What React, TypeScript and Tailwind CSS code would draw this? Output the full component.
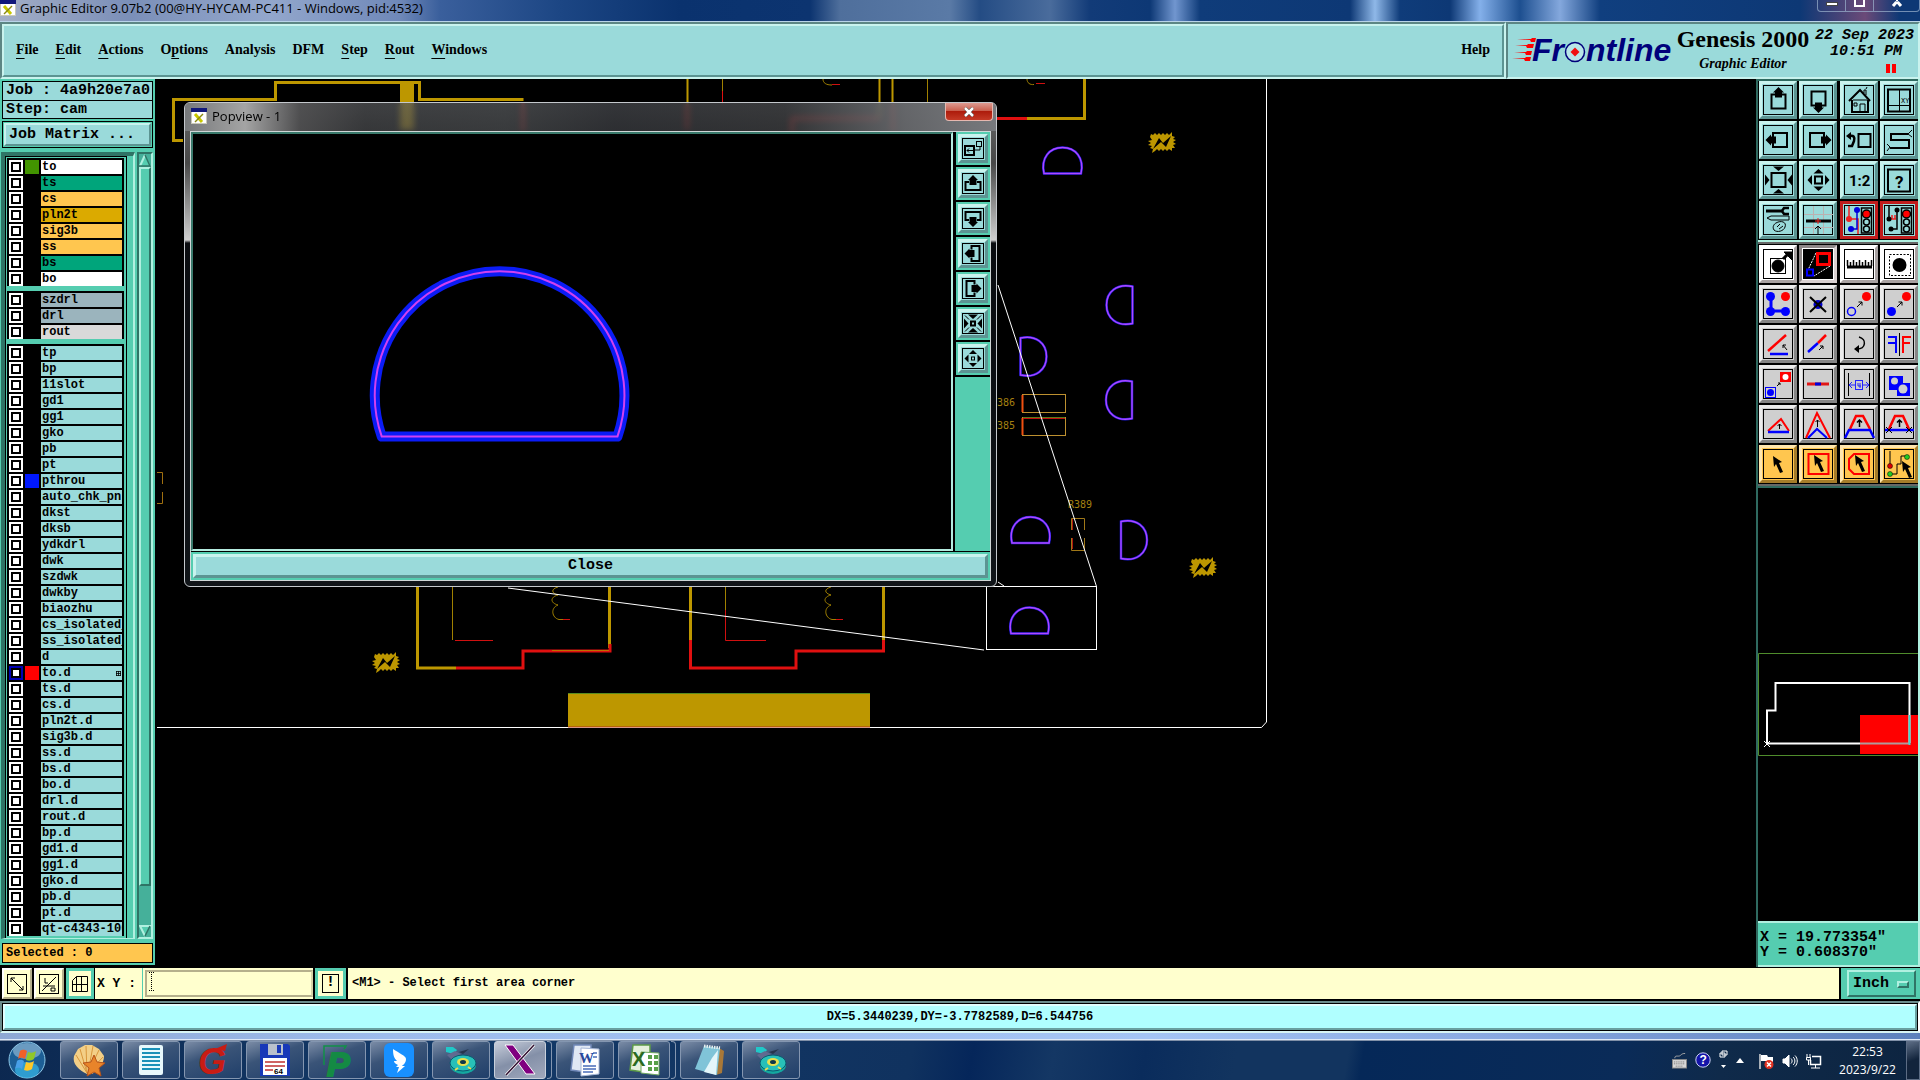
import { useState } from "react";
import type { ReactNode } from "react";

type Layer = {
  name: string;
  bg?: string;
  color?: string;
};

const MONO = "font-['Liberation_Mono',monospace]";
const SERIF = "font-['Liberation_Serif',serif]";
const UI = "font-['Open_Sans',sans-serif]";

const RAISED = "border-t-[#c9f3ee] border-l-[#c9f3ee] border-b-[#5c9492] border-r-[#5c9492]";
const SUNKEN = "border-t-[#5c8684] border-l-[#5c8684] border-b-[#c9f3ee] border-r-[#c9f3ee]";

const menus = [
  { label: "File", key: 0 },
  { label: "Edit", key: 0 },
  { label: "Actions", key: 0 },
  { label: "Options", key: 1 },
  { label: "Analysis", key: -1 },
  { label: "DFM", key: -1 },
  { label: "Step", key: 0 },
  { label: "Rout", key: 0 },
  { label: "Windows", key: 0 },
];

const layerGroups: Layer[][] = [
  [
    { name: "to", bg: "bg-white", color: "bg-[#429400]" },
    { name: "ts", bg: "bg-[#00a57b]" },
    { name: "cs", bg: "bg-[#ffc64f]" },
    { name: "pln2t", bg: "bg-[#dbaa00]" },
    { name: "sig3b", bg: "bg-[#ffc64f]" },
    { name: "ss", bg: "bg-[#ffc64f]" },
    { name: "bs", bg: "bg-[#00a57b]" },
    { name: "bo", bg: "bg-white" },
  ],
  [
    { name: "szdrl", bg: "bg-[#9bb4bd]" },
    { name: "drl", bg: "bg-[#9bb4bd]" },
    { name: "rout", bg: "bg-[#d9d9d9]" },
  ],
  [
    { name: "tp" },
    { name: "bp" },
    { name: "11slot" },
    { name: "gd1" },
    { name: "gg1" },
    { name: "gko" },
    { name: "pb" },
    { name: "pt" },
    { name: "pthrou", color: "bg-[#0018ff]" },
    { name: "auto_chk_pnl" },
    { name: "dkst" },
    { name: "dksb" },
    { name: "ydkdrl" },
    { name: "dwk" },
    { name: "szdwk" },
    { name: "dwkby" },
    { name: "biaozhu" },
    { name: "cs_isolated_" },
    { name: "ss_isolated_" },
    { name: "d" },
    { name: "to.d", color: "bg-[#ff0000]" },
    { name: "ts.d" },
    { name: "cs.d" },
    { name: "pln2t.d" },
    { name: "sig3b.d" },
    { name: "ss.d" },
    { name: "bs.d" },
    { name: "bo.d" },
    { name: "drl.d" },
    { name: "rout.d" },
    { name: "bp.d" },
    { name: "gd1.d" },
    { name: "gg1.d" },
    { name: "gko.d" },
    { name: "pb.d" },
    { name: "pt.d" },
    { name: "qt-c4343-100" },
  ],
];

function XIcon() {
  return (
    <svg width="16" height="16" viewBox="0 0 16 16" className="shrink-0">
      <rect x="0.5" y="0.5" width="15" height="15" fill="#fff" stroke="#c8c8b8" />
      <rect width="16" height="4" fill="#10187b" />
      <path d="M4 6l7 8" stroke="#c8c800" strokeWidth="3" />
      <path d="M12 6l-8 8" stroke="#8a8a10" strokeWidth="1.5" />
    </svg>
  );
}

function TitleBar() {
  return (
    <header className="flex h-[22px] shrink-0 items-start justify-between overflow-hidden border-b border-[#b9d3e8] bg-[linear-gradient(90deg,#a3aec6_0px,#7b8fb8_130px,#93a7cc_270px,#6f88b8_400px,#3a5f9c_440px,#1c4684_560px,#0a326e_680px,#0c3470_810px,#4f6f9c_840px,#5a7aa6_950px,#244c84_980px,#4a6c9c_1050px,#123b78_1090px,#0d3875_1150px,#7196cf_1175px,#0f3c7a_1200px,#0d3875_1350px,#8fb8e8_1375px,#0f3c7a_1400px,#0d3875_1450px,#84b0ea_1480px,#1d4f90_1520px,#84a8dd_1560px,#103f7f_1600px,#0d3875_1800px,#6b4a78_1865px,#0d3875_1900px)]">
      <div className="flex items-center gap-1">
        <XIcon />
        <h1 className={`${UI} text-[13px] leading-[14px] whitespace-nowrap text-black`}>
          Graphic Editor 9.07b2 (00@HY-HYCAM-PC411 - Windows, pid:4532)
        </h1>
      </div>
      <div className="flex h-3 w-[103px] overflow-hidden rounded-b border border-t-0 border-[#9db4cf]/70">
        <button aria-label="Minimize" className="flex w-[28px] items-start justify-center border-r border-[#9db4cf]/70 pt-[2px]">
          <span className="h-1 w-3 border border-[#444] bg-white" />
        </button>
        <button aria-label="Maximize" className="flex w-[28px] items-start justify-center border-r border-[#9db4cf]/70">
          <span className="h-[7px] w-[11px] border-2 border-t-0 border-white" />
        </button>
        <button aria-label="Close" className="flex flex-1 items-start justify-center">
          <svg width="12" height="7" viewBox="0 0 12 7">
            <path d="M2 6l3.5-4M10 6l-3.5-4M5 0h2" stroke="#fff" strokeWidth="3" />
          </svg>
        </button>
      </div>
    </header>
  );
}

function Logo() {
  return (
    <svg width="164" height="44" viewBox="0 -6 164 44" className="shrink-0 overflow-visible" role="img" aria-label="Frontline">
      <g fill="#f00">
        <path d="M5 4h14l1-1h4l-1 4h-4l-1-2z" />
        <path d="M3 10h12l1-1h6l-1 4h-6l-1-2z" />
        <path d="M2 17h12l1-1h5l-1 4h-5l-1-2z" />
        <path d="M0 23h13l1-1h5l-1 4h-5l-1-2z" />
      </g>
      <g fill="#00007b" fontFamily="Liberation Sans, sans-serif" fontSize="32" fontWeight="bold" fontStyle="italic">
        <text x="20" y="26">Fr</text>
        <text x="74" y="26">ntline</text>
      </g>
      <circle cx="63" cy="17" r="9.5" fill="#b8e6e8" stroke="#00007b" strokeWidth="1.5" />
      <path d="M63 12.5l4.5 4.5-4.5 4.5-4.5-4.5z" fill="#f01010" />
    </svg>
  );
}

function MenuBar() {
  return (
    <div className="flex h-[57px] shrink-0 bg-[#9adada]">
      <div className={`flex-1 border-2 ${SUNKEN}`}>
        <nav className={`${SERIF} flex h-full items-center justify-between border-2 ${RAISED} px-3 pb-[2px] text-[14px] font-bold text-black`}>
          <div className="flex gap-[17px]">
            {menus.map((m) => (
              <button key={m.label}>
                {m.key < 0 ? (
                  m.label
                ) : (
                  <>
                    {m.label.slice(0, m.key)}
                    <span className="underline underline-offset-4">{m.label[m.key]}</span>
                    {m.label.slice(m.key + 1)}
                  </>
                )}
              </button>
            ))}
          </div>
          <button>Help</button>
        </nav>
      </div>
      <div className={`flex w-[414px] items-center border-2 ${SUNKEN} pl-1 text-black`}>
        <Logo />
        <div className={`${SERIF} flex w-[134px] flex-col items-center pb-[2px] font-bold`}>
          <p className="text-[24px] leading-7 whitespace-nowrap">Genesis 2000</p>
          <p className="text-[14px] leading-[22px] italic">Graphic Editor</p>
        </div>
        <div className={`${MONO} flex flex-1 flex-col items-end pr-1 text-[15px] leading-4 font-bold italic`}>
          <p className="whitespace-nowrap">22 Sep 2023</p>
          <p className="pr-3">10:51 PM</p>
          <div className="mt-1 mr-[18px] flex gap-[2px]">
            <span className="h-[9px] w-1 bg-[#f00]" />
            <span className="h-[9px] w-1 bg-[#f00]" />
          </div>
        </div>
      </div>
    </div>
  );
}

function LayerRow({ layer, checked, onToggle }: { layer: Layer; checked: boolean; onToggle: () => void }) {
  const id = `layer-${layer.name}`;
  return (
    <li className="mb-[2px] flex h-[14px] gap-[2px]">
      <span className={`flex w-[14px] items-center justify-center ${checked ? "bg-[#0000b5]" : "bg-white"}`}>
        <input
          id={id}
          type="checkbox"
          checked={checked}
          onChange={onToggle}
          className="size-[10px] appearance-none border-2 border-black bg-white"
        />
      </span>
      <span className={`w-[14px] ${layer.color ?? ""}`} />
      <label
        htmlFor={id}
        className={`flex flex-1 items-center justify-between overflow-hidden pl-px text-[12px] leading-[14px] font-bold whitespace-nowrap text-black ${layer.bg ?? "bg-[#9adada]"}`}
      >
        {layer.name}
        {checked && (
          <svg width="5" height="5" viewBox="0 0 5 5" className="mr-px shrink-0">
            <path d="M0 0.5h5M0 2.5h5M0 4.5h5M0.5 0v5M2.5 0v5M4.5 0v5" stroke="#000" strokeWidth="0.8" />
          </svg>
        )}
      </label>
    </li>
  );
}

function LayerPanel() {
  const [active, setActive] = useState("to.d");

  return (
    <aside className={`${MONO} flex w-[155px] shrink-0 flex-col self-start bg-[#55cdb0] py-[2px] pr-[2px] pl-px text-black`}>
      <div className="ml-px border border-black bg-[#9adada] text-[15px] font-bold whitespace-nowrap">
        <p className="border-b border-black px-[3px] leading-[18px]">Job : 4a9h20e7a0</p>
        <p className="px-[3px] leading-[17px]">Step: cam</p>
      </div>
      <div className="mt-[2px] ml-px border border-black p-px">
        <button className={`block w-full border-2 ${RAISED} bg-[#9adada] px-[3px] text-left text-[15px] leading-[19px] font-bold whitespace-nowrap`}>
          Job Matrix ...
        </button>
      </div>
      <div className="mt-1 flex justify-between">
        <div className="flex w-[134px] border-t-4 border-r-2 border-b border-l-4 border-t-[#2f7466] border-r-[#b0f0e0] border-b-[#b0f0e0] border-l-[#2f7466] pr-1">
          <ul className="flex w-[122px] flex-col gap-[3px] border border-b-0 border-black p-px pr-[2px] pb-0">
            {layerGroups.map((group, i) => (
              <li key={i}>
                <ul className="bg-black px-[2px] pt-[2px]">
                  {group.map((layer) => (
                    <LayerRow
                      key={layer.name}
                      layer={layer}
                      checked={active === layer.name}
                      onToggle={() => setActive(layer.name)}
                    />
                  ))}
                </ul>
              </li>
            ))}
          </ul>
          <span className="ml-[2px] w-[2px] bg-[#b0f0e0]" />
        </div>
        <div className="flex w-[16px] flex-col border-2 border-t-[#2f7466] border-r-[#b0f0e0] border-b-[#b0f0e0] border-l-[#2f7466] bg-[#45b09a]">
          <button aria-label="Scroll up">
            <svg width="12" height="13" viewBox="0 0 12 13">
              <path d="M6 0L12 12H0z" fill="#55cdb0" />
              <path d="M6 1L1 12" stroke="#b0f0e0" strokeWidth="2" />
              <path d="M6 1l5 11H0" stroke="#2f7466" strokeWidth="1.5" fill="none" />
            </svg>
          </button>
          <div className="h-[719px] border-2 border-t-[#b0f0e0] border-r-[#2f7466] border-b-[#2f7466] border-l-[#b0f0e0] bg-[#55cdb0]" />
          <button aria-label="Scroll down" className="mt-auto">
            <svg width="12" height="12" viewBox="0 0 12 12">
              <path d="M0 0h12L6 11z" fill="#55cdb0" />
              <path d="M12 1H1l5 10" stroke="#b0f0e0" strokeWidth="2" fill="none" />
              <path d="M6 11l5-10" stroke="#2f7466" strokeWidth="1.5" />
            </svg>
          </button>
        </div>
      </div>
      <p className="mt-1 ml-px border border-black bg-[#ffc64f] px-[3px] text-[12px] leading-[18px] font-bold">Selected : 0</p>
    </aside>
  );
}

/* ---------- toolbar icons, drawn on a 38 unit button ---------- */

function Frame({ fill = "none" }: { fill?: string }) {
  return <rect x="4.5" y="4.5" width="29" height="29" fill={fill} stroke="#000" />;
}

function PanArrow({ angle }: { angle: number }) {
  return (
    <g transform={`rotate(${angle} 19.5 19)`}>
      <rect x="12.5" y="13.5" width="14" height="14" fill="none" stroke="#000" strokeWidth="2" />
      <path d="M19.5 6l5.5 5.5h-2v5h-7v-5h-2z" fill="#000" />
    </g>
  );
}

const FOUR = [0, 90, 180, 270];

const viewIcons: ReactNode[] = [
  <PanArrow angle={0} />,
  <PanArrow angle={180} />,
  <g fill="none" stroke="#000">
    <path d="M12 19v12h16V19M9 20L20 9l10 11" strokeWidth="2" />
    <path d="M13 19h14M20 31v-8h5v8M14 22h3v3h-3zM24 12V9h2v5M26 8l1-2" />
  </g>,
  <g fill="none" stroke="#000">
    <rect x="8" y="8.5" width="22" height="22" strokeWidth="2" />
    <path d="M19.5 8v23M8 24.5h22" />
    <text x="21" y="22" fontSize="7" fill="#000" stroke="none" fontFamily="Liberation Mono, monospace">XY</text>
  </g>,
  <PanArrow angle={270} />,
  <PanArrow angle={90} />,
  <g fill="none" stroke="#000" strokeWidth="2">
    <rect x="18.5" y="13" width="12" height="13" />
    <path d="M9 15c5-1 6 1 5 5l-2 5H8" strokeWidth="2.5" />
    <path d="M6 15l5-4v8z" fill="#000" stroke="none" />
  </g>,
  <g fill="none" stroke="#000">
    <path d="M28 13H11v6h18v8H10" strokeWidth="2" />
    <path d="M32 9l-4 4 4 3M7 23l3 3-3 4" />
  </g>,
  <g>
    <rect x="12.5" y="12" width="14" height="14" fill="none" stroke="#000" strokeWidth="2" />
    {FOUR.map((a) => (
      <path key={a} transform={`rotate(${a} 19.5 19)`} d="M14 5.5h11L19.5 10z" />
    ))}
  </g>,
  <g>
    <rect x="16" y="15.5" width="7" height="7" fill="none" stroke="#000" strokeWidth="2" />
    {FOUR.map((a) => (
      <path key={a} transform={`rotate(${a} 19.5 19)`} d="M14.5 12.5h10L19.5 8z" />
    ))}
  </g>,
  <text x="9" y="25" fontSize="15" fontWeight="bold" fontFamily="Roboto, sans-serif">1:2</text>,
  <g>
    <rect x="8" y="8.5" width="22" height="22" fill="none" stroke="#000" strokeWidth="2" />
    <text x="15" y="27" fontSize="17" fontWeight="bold" fontFamily="Roboto, sans-serif">?</text>
  </g>,
  <g fill="none" stroke="#000">
    <path d="M7 10h17" strokeWidth="3" />
    <path d="M30 7h-5l-2 3 2 3h5" strokeWidth="2.5" />
    <path d="M8 17l4-2h18v4H12z" />
    <path d="M17 22c5-3 11-1 9 4-1 4-8 6-11 3-2-3 0-6 2-7zM18 26l3-3M20 28l4-3" />
  </g>,
  <g fill="none">
    <path d="M14.5 5v28M24.5 5v28M5 13.5h29M5 26.5h29" stroke="#bbb0b0" />
    <path d="M7 20h25" stroke="#000" strokeWidth="3" />
    <path d="M19 17v6M16 20h6" stroke="#e22" />
    <path d="M19 33v-8M16 28l3-3 3 3" stroke="#000" />
  </g>,
  <g fill="none" strokeWidth="1.5">
    <path d="M9 5v13h9v15" stroke="#e22" />
    <path d="M17 9v19h-6" stroke="#00d" />
    <circle cx="9" cy="18" r="3" fill="#e22" />
    <circle cx="17" cy="9" r="3" fill="#00d" />
    <circle cx="11" cy="28" r="3" fill="#00d" />
    <rect x="21.5" y="7" width="10" height="25" stroke="#000" />
    <circle cx="26.5" cy="13" r="4" fill="#f00" stroke="#000" />
    <circle cx="26.5" cy="21" r="3" stroke="#000" />
    <circle cx="26.5" cy="28" r="3" stroke="#000" />
  </g>,
  <g fill="none" strokeWidth="1.5">
    <path d="M9 5v13M17 9v19h-6" stroke="#000" />
    <path d="M9 18h7M12 14v4M15 14v4" stroke="#e22" />
    <circle cx="9" cy="18" r="2.5" fill="#000" />
    <circle cx="17" cy="9" r="2.5" fill="#000" />
    <circle cx="11" cy="28" r="2.5" fill="#000" />
    <rect x="21.5" y="7" width="10" height="25" stroke="#000" />
    <circle cx="26.5" cy="13" r="4" fill="#f00" stroke="#000" />
    <circle cx="26.5" cy="21" r="3" stroke="#000" />
    <circle cx="26.5" cy="28" r="3" stroke="#000" />
  </g>,
];

const Cursor = () => <path d="M14 8l9 6-3 1 4 9-3 1-4-9-2 3z" fill="#000" />;

const editIcons: ReactNode[] = [
  <g fill="none" stroke="#000">
    <rect x="11.5" y="13.5" width="15" height="15" />
    <circle cx="19" cy="21" r="6" fill="#000" />
    <path d="M24 14l6-6" strokeWidth="3" />
    <path d="M25 7h8v8z" fill="#000" />
  </g>,
  <g fill="none">
    <path d="M17 8L9 25M31 21L15 31" stroke="#fff" strokeDasharray="2 1" />
    <rect x="18.5" y="8.5" width="12" height="11" stroke="#f00" strokeWidth="3" />
    <rect x="8" y="24.5" width="6" height="6" stroke="#00f" strokeWidth="2" />
  </g>,
  <g stroke="#000" fill="none">
    <path d="M7 22h25" strokeWidth="3" />
    <path d="M7.5 15v6M10.5 17v4M13.5 15v6M16.5 17v4M19.5 15v6M22.5 17v4M25.5 15v6M28.5 17v4M31.5 15v6" strokeWidth="1.5" />
  </g>,
  <g>
    <rect x="9.5" y="9.5" width="21" height="21" fill="none" stroke="#000" strokeDasharray="2 1.5" />
    <circle cx="19.5" cy="20" r="7" />
  </g>,
  <g fill="#00f">
    <path d="M12 11v15h14" stroke="#00f" strokeWidth="3" fill="none" />
    <circle cx="11.5" cy="11.5" r="4.5" />
    <circle cx="11.5" cy="26.5" r="4.5" />
    <circle cx="26.5" cy="26.5" r="4.5" />
    <circle cx="26.5" cy="11.5" r="4.5" fill="#f00" />
  </g>,
  <g>
    <circle cx="19" cy="19.5" r="4.5" fill="#00c" />
    <path d="M11 12l16 15M27 12L11 27" stroke="#000" strokeWidth="2" />
  </g>,
  <g fill="none">
    <circle cx="11.5" cy="26.5" r="4" stroke="#00f" strokeWidth="1.5" />
    <path d="M17 22l5-5M18.5 17H22v3.5" stroke="#000" />
    <circle cx="26.5" cy="11.5" r="4.5" fill="#f00" />
  </g>,
  <g fill="none">
    <circle cx="11.5" cy="26.5" r="4.5" fill="#00f" />
    <path d="M17 22l5-5M18.5 17H22v3.5" stroke="#000" />
    <circle cx="26.5" cy="11.5" r="4.5" fill="#f00" />
  </g>,
  <g fill="none">
    <path d="M9 26l18-16" stroke="#f00" strokeWidth="2.5" />
    <path d="M11 29h18" stroke="#00f" strokeWidth="2.5" />
    <path d="M28 25l-4-5M24 23v-3h3" stroke="#000" />
  </g>,
  <g fill="none">
    <path d="M9 27l10-9" stroke="#00f" strokeWidth="2.5" />
    <path d="M19 18l8-8" stroke="#f00" strokeWidth="2.5" />
    <path d="M20 25l4-4M21 21h3v3" stroke="#000" />
  </g>,
  <g>
    <path d="M19 12c8 2 7 12-2 12" stroke="#000" strokeWidth="1.5" fill="none" />
    <path d="M14 24l5-4v8z" />
  </g>,
  <g fill="none" strokeWidth="2">
    <path d="M8 12h8v16M8 18h8" stroke="#00f" />
    <path d="M19.5 8v23" stroke="#000" strokeWidth="1" />
    <path d="M31 12h-8v16M30 18h-7" stroke="#f00" />
  </g>,
  <g fill="none">
    <rect x="6.5" y="22.5" width="10" height="10" stroke="#00f" />
    <circle cx="11.5" cy="27.5" r="3.5" fill="#00f" />
    <path d="M18 21l3-3M19 18h2v2" stroke="#000" />
    <rect x="21.5" y="7.5" width="10" height="9" fill="#f00" stroke="#f00" />
    <circle cx="26.5" cy="12" r="3" fill="#fff" />
  </g>,
  <g strokeWidth="3">
    <path d="M8 19h22" stroke="#e01818" />
    <path d="M16 19h6" stroke="#00d" />
  </g>,
  <g fill="none">
    <path d="M8.5 8v23M29.5 8v23" stroke="#000" />
    <path d="M9 20h20M12 17l-3 3 3 3M26 17l3 3-3 3" stroke="#22f" />
    <rect x="15.5" y="15.5" width="7" height="9" fill="#cfcfcf" stroke="#22f" />
    <path d="M18 18v3h3M20 18v5" stroke="#22f" />
  </g>,
  <g>
    <path d="M9 11h14v7h7v13H17v-6H9z" fill="#00f" />
    <circle cx="14.5" cy="16" r="3.5" fill="#cfcfcf" />
    <circle cx="23" cy="24" r="4.5" fill="#cfcfcf" />
  </g>,
  <g fill="none" strokeWidth="2">
    <path d="M9 26l13-12 8 12" stroke="#f00" />
    <path d="M9 27h21" stroke="#00f" strokeWidth="2.5" />
    <path d="M20.5 24v-5M18.5 21l2-2 2 2" stroke="#000" strokeWidth="1" />
  </g>,
  <g fill="none" strokeWidth="2">
    <path d="M7 33L18 8l13 25" stroke="#f00" />
    <path d="M9 33l9-9 10 9" stroke="#00f" />
    <path d="M18.5 22v-7M16.5 17l2-2 2 2" stroke="#000" strokeWidth="1" />
  </g>,
  <g fill="none" strokeWidth="2.5">
    <path d="M10 24l6-13h7l7 13" stroke="#f00" />
    <path d="M5 33l4-8h21l4 8" stroke="#00f" />
    <path d="M19.5 22v-7M17 17.5l2.5-2.5 2.5 2.5" stroke="#000" strokeWidth="1.5" />
  </g>,
  <g fill="none" strokeWidth="2.5">
    <path d="M9 24l6-13h8l6 13" stroke="#f00" />
    <path d="M5 25h29" stroke="#00f" />
    <path d="M6 22l6 6M12 22l-6 6M26 22l6 6M32 22l-6 6" stroke="#000" strokeWidth="1" />
    <path d="M19.5 22v-7M17 17.5l2.5-2.5 2.5 2.5" stroke="#000" strokeWidth="1.5" />
  </g>,
  <g transform="translate(0 3)"><Cursor /></g>,
  <g>
    <rect x="9.5" y="9" width="20" height="20" fill="none" stroke="#f00" strokeWidth="2" />
    <g transform="translate(1 2)"><Cursor /></g>
  </g>,
  <g>
    <path d="M14 9h15v20H14l-5-5V14z" fill="none" stroke="#f00" strokeWidth="2" />
    <g transform="translate(1 2)"><Cursor /></g>
  </g>,
  <g>
    <path d="M10 6v14M10 29h7v-10h4v-8h6" fill="none" stroke="#000" />
    <circle cx="10" cy="21" r="2.5" fill="#d00" stroke="#000" strokeWidth="0.5" />
    <circle cx="10" cy="29" r="2.5" fill="#2c2" stroke="#000" strokeWidth="0.5" />
    <circle cx="27" cy="12" r="2.5" fill="#2c2" stroke="#000" strokeWidth="0.5" />
    <g transform="translate(8 8)"><Cursor /></g>
  </g>,
];

const viewNames = [
  "Pan up", "Pan down", "Home", "Set XY", "Pan left", "Pan right", "Previous zoom", "Serpentine",
  "Zoom out", "Zoom in", "Zoom 1:2", "Help", "Settings", "Snap", "Net analysis", "Net violations",
];
const editNames = [
  "Feature", "Popview", "Measure", "Select window", "Move", "Delete", "Copy outline", "Copy",
  "Rotate", "Extend", "Arc", "Mirror", "Resize", "Join", "Gap", "Contourize",
  "Slope", "Peak", "Trapeze", "Trapeze cut", "Pick", "Pick rectangle", "Pick polygon", "Pick net",
];

function editTone(i: number) {
  if (i === 1) return "bg-white border-t-[#8e8888] border-l-[#8e8888] border-b-[#d8d0d0] border-r-[#d8d0d0]";
  if (i < 4) return "bg-white border-t-white border-l-white border-b-[#a8a2a2] border-r-[#a8a2a2]";
  if (i < 20) return "bg-[#cfcfcf] border-t-[#ececec] border-l-[#ececec] border-b-[#868686] border-r-[#868686]";
  return "bg-[#ffc64f] border-t-[#ffe6ae] border-l-[#ffe6ae] border-b-[#a57c2a] border-r-[#a57c2a]";
}

function ToolButton({ name, tone, children }: { name: string; tone: string; children: ReactNode }) {
  return (
    <button aria-label={name} className={`size-[38px] border-[3px] ${tone}`}>
      <svg width="32" height="32" viewBox="3 3 32 32">
        {children}
      </svg>
    </button>
  );
}

function RightPanel() {
  return (
    <aside className="flex w-[164px] shrink-0 flex-col border-r-2 border-l-2 border-r-[#b0f0e0] border-l-[#2f6a60] bg-black">
      <div className="grid grid-cols-4 justify-start gap-[2px] border-t-2 border-b-2 border-t-[#2f6a60] border-b-[#b0f0e0] pb-px pl-px">
        {viewIcons.map((icon, i) => (
          <ToolButton
            key={viewNames[i]}
            name={viewNames[i]}
            tone={i > 13 ? "bg-[#9adada] border-[#c01c1c]" : `bg-[#9adada] ${RAISED}`}
          >
            <Frame />
            {icon}
          </ToolButton>
        ))}
      </div>
      <div className="grid grid-cols-4 justify-start gap-[2px] border-t-2 border-b-2 border-t-[#666] border-b-[#666] pt-px pb-px pl-px">
        {editIcons.map((icon, i) => (
          <ToolButton key={editNames[i]} name={editNames[i]} tone={editTone(i)}>
            <Frame fill={i === 1 ? "#000" : "none"} />
            {icon}
          </ToolButton>
        ))}
      </div>
      <div className="min-h-0 flex-1 overflow-hidden border-t-2 border-t-[#2f6a60]">
        <svg width="160" height="432" viewBox="0 -1 160 432" fill="none">
          <path d="M161 164.5H0.5v102H161" stroke="#4f8c2c" />
          <rect x="102" y="226" width="58" height="39" fill="#f00" />
          <path d="M102 254.5H9V221.5h8.5V194h134v60" stroke="#fff" strokeWidth="2" />
          <path d="M102 254.5h50" stroke="#b09a9a" strokeWidth="2" />
          <path d="M151.5 226v30" stroke="#3fd8d0" strokeWidth="2" />
          <path d="M6 252l6 6M12 252l-6 6" stroke="#fff" />
        </svg>
      </div>
      <div className={`${MONO} border-t-2 border-b-2 border-t-[#b0f0e0] border-b-[#b0f0e0] bg-[#55cdb0] px-[2px] pt-[7px] pb-[5px] text-[15px] leading-[15px] font-bold text-black`}>
        <p>X = 19.773354"</p>
        <p>Y = 0.608370"</p>
      </div>
    </aside>
  );
}

/* ---------- board canvas ---------- */

function Pad({ x, y, angle }: { x: number; y: number; angle: number }) {
  return (
    <g transform={`translate(${x} ${y}) rotate(${angle})`} fill="none">
      <path d="M-18.5 12.5C-22 -3 -13 -13.5 0 -13.5S22 -3 18.5 12.5z" stroke="#1a1ae0" strokeWidth="2.5" />
      <path d="M-18.5 12.5C-22 -3 -13 -13.5 0 -13.5S22 -3 18.5 12.5z" stroke="#b048ff" strokeWidth="1.4" />
    </g>
  );
}

function Spark({ x, y }: { x: number; y: number }) {
  return (
    <g transform={`translate(${x} ${y})`}>
      <path
        d="M-11 -8l2 1 2-2 2 2 2-2 2 2 2-2 2 2 2-2 2 2 3-3v4l3 1-2 2 3 1-3 2 3 2-3 1 2 3-3 0 0 3-3-2-2 2-2-2-2 2-2-2-2 2-2-2-2 2-3 2 1-4-3-1 2-2-4-1 3-2-3-2 4-1-2-3z"
        fill="#bd9700"
      />
      <path d="M-9 7L-3 -4L1 1L9 -6L4 5L-1 0z" fill="#000" />
    </g>
  );
}

function BoardDrawing() {
  return (
    <svg
      className="h-full w-full"
      viewBox="157 79 1600 888"
      preserveAspectRatio="xMinYMin slice"
      fill="none"
    >
      <path d="M1266.5 79V722l-5 5.5H157" stroke="#fff" />

      <g stroke="#bd9700" strokeWidth="3">
        <path d="M183 140.5h-9.5v-41h102v-17h144v17h104" />
        <path d="M1084.5 79v39.5H1027" />
        <path d="M417.5 560v108H456" />
        <path d="M609.5 560v88M690.5 560v80M883.5 560v80" />
        <path d="M687.5 79v45M879.5 79v40M892.5 79v24" strokeWidth="2" />
      </g>
      <rect x="400" y="82" width="14" height="48" fill="#bd9700" />
      <g stroke="#e01010" strokeWidth="3">
        <path d="M523 102v30M687 104v26M893 104v28" />
        <path d="M722.5 90v14" strokeWidth="1" />
        <path d="M456 668h67v-17h29M552 651h58v-7" />
        <path d="M690.5 640v28H796v-17h87.5V640" />
        <path d="M792 135v-16.5h88M960 118.5h67" />
      </g>
      <path d="M552 650.5h57" stroke="#bd7000" />
      <g stroke="#a08000">
        <path d="M452.5 586v54M725.5 586v30M927.5 79v24M722.5 79v12" />
        <path d="M558 587c-7 2-7 6 0 8-8 2-8 8 0 10-8 3-6 13 1 14.5h5" />
        <path d="M831 587c-7 2-7 6 0 8-8 2-8 8 0 10-8 3-6 13 1 14.5h5" />
        <path d="M823 79c0 4 3 6 9 6M1027 79c0 4 3 6 7 5.5" />
      </g>
      <g stroke="#d01010">
        <path d="M455 640.5h38M725.5 610v30.5H766M563 619.5h7M836 619.5h7M832 84.5h8M1036 83.5h9" />
      </g>
      <path d="M157 472.5h5.5V484M162.5 492v11.5H157" stroke="#a07010" />

      <rect x="568" y="694" width="302" height="33" fill="#bd9700" />
      <path d="M568 693.5h302" stroke="#5a8c20" />
      <path d="M568 727h302" stroke="#b03010" />

      <rect x="1022.5" y="394.5" width="43" height="18" stroke="#bd9030" />
      <rect x="1022.5" y="417.5" width="43" height="18" stroke="#bd9030" />
      <path d="M1022.5 395v17M1022.5 418v17" stroke="#f05010" strokeWidth="2" />
      <path d="M1023 417.5h42" stroke="#5a7c18" />
      <path d="M1023 418.5h42" stroke="#c01010" />
      <path d="M1071.5 530v-11.5h13V530M1071.5 538v12.5h13V538" stroke="#a07818" />
      <path d="M1072.5 519v11M1072.5 538v11" stroke="#b01810" />
      <g fill="#a58010" fontFamily="DejaVu Sans Mono, monospace" fontSize="10">
        <text x="997" y="406">386</text>
        <text x="997" y="429">385</text>
        <text x="1068" y="508">R389</text>
      </g>

      <Pad x={1062.5} y={161} angle={0} />
      <Pad x={1120} y={305} angle={270} />
      <Pad x={1033} y={356.5} angle={90} />
      <Pad x={1119.5} y={400} angle={270} />
      <Pad x={1030.5} y={530.5} angle={0} />
      <Pad x={1133.5} y={540} angle={90} />
      <Pad x={1029.5} y={621} angle={0} />

      <Spark x={1162} y={142} />
      <Spark x={1203} y={567} />
      <Spark x={386} y={662} />

      <g stroke="#fff">
        <rect x="986.5" y="586.5" width="110" height="63" />
        <path d="M998 285l98.5 301.5M508 588l476 62M998 582l6 4" />
      </g>
    </svg>
  );
}

function PopArrow({ angle }: { angle: number }) {
  return (
    <g transform={`rotate(${angle} 10 10.5)`}>
      <path d="M6 9H2.5v8h15V9H14" fill="none" stroke="#000" strokeWidth="2" />
      <path d="M10 2l5 5h-1.5v5h-7V7H5z" />
    </g>
  );
}

const popIcons: { name: string; icon: ReactNode }[] = [
  {
    name: "Pick area",
    icon: (
      <g fill="none" stroke="#000">
        <rect x="2" y="8" width="9" height="9" strokeWidth="2" />
        <rect x="13.5" y="3.5" width="5" height="5" />
        <path d="M11 12h6V9M4 12.5h6M6 10.5l-2 2 2 2" />
      </g>
    ),
  },
  { name: "Popview up", icon: <PopArrow angle={0} /> },
  { name: "Popview down", icon: <PopArrow angle={180} /> },
  { name: "Popview left", icon: <PopArrow angle={270} /> },
  { name: "Popview right", icon: <PopArrow angle={90} /> },
  {
    name: "Popview zoom out",
    icon: (
      <g>
        <rect x="8" y="8.5" width="4" height="4" fill="none" stroke="#000" strokeWidth="2" />
        {FOUR.map((a) => (
          <path key={a} transform={`rotate(${a} 10 10.5)`} d="M5 1.5h10L10 6z" />
        ))}
        <path d="M2 2.5l4 4M18 2.5l-4 4M2 18.5l4-4M18 18.5l-4-4" stroke="#000" />
      </g>
    ),
  },
  {
    name: "Popview zoom in",
    icon: (
      <g>
        <rect x="8.5" y="9" width="3" height="3" fill="none" stroke="#000" />
        {FOUR.map((a) => (
          <path key={a} transform={`rotate(${a} 10 10.5)`} d="M6 6h8L10 2z" />
        ))}
      </g>
    ),
  },
];

function Popview() {
  return (
    <section
      aria-label="Popview - 1"
      className="absolute top-[23px] left-[27px] flex h-[485px] w-[813px] flex-col rounded-[6px] border border-[#c4c8cc] bg-[linear-gradient(180deg,rgba(190,190,190,0.55)_0px,rgba(120,120,120,0.6)_60px,rgba(230,230,230,0.9)_137px,#0a0c10_140px,#101418_100%)] px-[5px] pb-[5px] backdrop-blur-[3px]"
    >
      <div className="-mx-[5px] flex h-7 shrink-0 items-start justify-between rounded-t-[5px] bg-[linear-gradient(90deg,#77797b_0px,#a4a4a4_60px,rgba(70,70,72,0.7)_115px,rgba(0,3,8,0.4)_180px,rgba(24,28,32,0.5)_320px,rgba(0,3,10,0.5)_430px,rgba(10,12,16,0.5)_600px,rgba(100,102,106,0.8)_720px,#77797d_812px)] pl-[6px]">
        <div className="flex h-[26px] items-center gap-[5px]">
          <XIcon />
          <h2 className={`${UI} text-[13px] leading-4 text-black`}>Popview - 1</h2>
        </div>
        <button
          aria-label="Close window"
          className="mr-[3px] flex h-[18px] w-12 items-center justify-center rounded-b-[4px] border border-t-0 border-[#e6b8b0] bg-[linear-gradient(180deg,#dc9a90_0%,#c9604f_45%,#ae1c0c_50%,#c43a26_100%)]"
        >
          <svg width="12" height="10" viewBox="0 0 12 10">
            <path d="M2 1l8 8M10 1L2 9" stroke="#444" strokeWidth="3.5" />
            <path d="M2 1l8 8M10 1L2 9" stroke="#fff" strokeWidth="2.5" />
          </svg>
        </button>
      </div>
      <div className="flex min-h-0 flex-1 flex-col border border-[#cfd6d6] bg-black">
        <div className="flex min-h-0 flex-1">
          <div className="flex-1 border-2 border-t-[#3a7a6c] border-r-[#b5ece0] border-b-[#b5ece0] border-l-[#3a7a6c] bg-black">
            <svg width="100%" height="100%" viewBox="193 133 759 416" preserveAspectRatio="xMinYMin slice" fill="none">
              <path d="M382 436A125 124.5 0 1 1 618 436z" stroke="#0b1cf5" strokeWidth="10" strokeLinejoin="round" />
              <path d="M382 436A125 124.5 0 1 1 618 436z" stroke="#d040f0" strokeWidth="2" />
            </svg>
          </div>
          <div className="ml-[2px] flex w-[35px] flex-col bg-[#55cdb0]">
            {popIcons.map((p) => (
              <div key={p.name} className="border-b-2 border-l border-black p-[2px]">
                <button aria-label={p.name} className={`block h-[29px] w-full border-[3px] ${RAISED} bg-[#9adada]`}>
                  <svg width="24" height="23" viewBox="-2 -1 24 23">
                    <rect x="-0.5" y="0.5" width="21" height="20" fill="none" stroke="#000" />
                    {p.icon}
                  </svg>
                </button>
              </div>
            ))}
          </div>
        </div>
        <div className="mt-px bg-[#55cdb0] p-[2px]">
          <button className={`${MONO} block h-6 w-full border-[3px] ${RAISED} bg-[#9adada] text-[15px] leading-[18px] font-bold text-black`}>
            Close
          </button>
        </div>
      </div>
    </section>
  );
}

/* ---------- bottom bars ---------- */

function CommandBar() {
  const small = "flex w-[30px] items-center justify-center border-2 border-t-white border-l-white border-b-[#b5b08c] border-r-[#b5b08c] bg-[#ffffce]";
  return (
    <div className={`${MONO} flex h-[34px] shrink-0 gap-[2px] border-t border-b-2 border-black bg-black pl-[2px] text-[12px] font-bold text-black`}>
      <button aria-label="Snap diagonal" className={small}>
        <svg width="22" height="22" viewBox="0 0 22 22" fill="none" stroke="#000">
          <rect x="1.5" y="1.5" width="19" height="19" />
          <path d="M5 5l12 12M5 9V5h4M17 13v4h-4" />
        </svg>
      </button>
      <button aria-label="Angle" className={small}>
        <svg width="22" height="22" viewBox="0 0 22 22" fill="none" stroke="#000">
          <rect x="1.5" y="1.5" width="19" height="19" />
          <path d="M4 18L18 4M7 5v5h3M5 13h12M13 15h4v3h-4z" />
        </svg>
      </button>
      <button aria-label="Grid" className="flex w-[28px] items-center justify-center border-[3px] border-[#55cdb0] bg-[#ffffce]">
        <svg width="20" height="20" viewBox="0 0 20 20" fill="none" stroke="#000">
          <path d="M2.5 6.5l4-4h11v15h-15zM2.5 10.5h15M11.5 2.5v15M6.5 2.5v15" />
        </svg>
      </button>
      <div className="relative -ml-px flex bg-[#ffffce]">
        <label htmlFor="xy" className="w-[48px] border-r border-[#55cdb0] pl-[2px] text-[13px] leading-[31px] whitespace-nowrap">
          X Y :
        </label>
        <input
          id="xy"
          type="text"
          className="my-[2px] ml-[2px] w-[168px] border-2 border-t-[#b5b08c] border-r-[#d8d4a8] border-b-[#b5b08c] border-l-[#b5b08c] bg-[#ffffce] px-1 outline-none"
        />
        <svg width="5" height="19" viewBox="0 0 5 19" className="pointer-events-none absolute top-1 left-[54px]">
          <path d="M2.5 0v19M0 0.5h5M0 18.5h5" stroke="#000" strokeDasharray="1 1" />
        </svg>
      </div>
      <button aria-label="Alert" className="flex w-[31px] items-center justify-center border-[3px] border-[#55cdb0] bg-[#ffffce]">
        <span className="flex h-[19px] w-[17px] items-center justify-center border border-black text-[15px]">!</span>
      </button>
      <p className="flex-1 bg-[#ffffce] pl-1 leading-[31px]">{"<M1> - Select first area corner"}</p>
      <div className="flex w-[79px] bg-[#55cdb0] py-[2px] pr-1 pl-[6px]">
        <div className="relative flex-1 border-2 border-t-[#b0f0e0] border-r-[#2f7466] border-b-[#2f7466] border-l-[#b0f0e0]">
          <select aria-label="Units" className="h-full w-full appearance-none bg-transparent pl-1 text-[15px] leading-5 font-bold">
            <option>Inch</option>
            <option>MM</option>
          </select>
          <span className="pointer-events-none absolute top-[9px] right-[5px] h-[7px] w-3 border-2 border-t-[#b0f0e0] border-r-[#2f7466] border-b-[#2f7466] border-l-[#b0f0e0]" />
        </div>
      </div>
    </div>
  );
}

function StatusBar() {
  return (
    <div className="h-8 shrink-0 border-2 border-t-[#6a8c8c] border-r-white border-b-[#d8f4f4] border-l-[#6a8c8c] bg-black p-px">
      <output className={`${MONO} block h-full border-2 border-t-[#e0ffff] border-r-[#6aa0a0] border-b-[#6aa0a0] border-l-[#e0ffff] bg-[#b0ffff] text-center text-[12px] leading-[22px] font-bold text-black`}>
        DX=5.3440239,DY=-3.7782589,D=6.544756
      </output>
    </div>
  );
}

function DiscIcon() {
  return (
    <svg width="36" height="34" viewBox="0 0 36 34">
      <path d="M3 4h7l4 3-3 4-8-2z" fill="#20c8c8" />
      <path d="M4 12l8-4 6 3-8 7z" fill="#606a90" />
      <path d="M16 9l10-3-6 5z" fill="#26344c" />
      <ellipse cx="20" cy="22" rx="13" ry="9" fill="#14a8a0" />
      <ellipse cx="20" cy="20" rx="13" ry="8" fill="#28c0b8" stroke="#0a5a70" />
      <ellipse cx="20" cy="19" rx="6" ry="4" fill="#e8e050" />
      <ellipse cx="20" cy="19" rx="3" ry="2" fill="#103848" />
      <path d="M12 27l3-2M28 26l-3-2" stroke="#e8e050" strokeWidth="2" />
    </svg>
  );
}

const tasks: { name: string; active?: boolean; stacked?: boolean; icon: ReactNode }[] = [
  {
    name: "Shell",
    icon: (
      <svg width="36" height="34" viewBox="0 0 36 34">
        <path d="M16 31C8 27 1 21 3 13l4-7 7-4 7 0 7 4 5 7c0 8-6 14-12 18z" fill="#f3cf87" />
        <path d="M16 30L5 12M16 30L9 6M16 30L15 3M17 30L22 3M17 30L28 7M17 30L32 14" stroke="#d8963c" fill="none" />
        <path d="M23 12l3 7 8 1-6 5 2 8-7-4-7 4 2-8-6-5 8-1z" fill="#e8842a" stroke="#b5531a" />
      </svg>
    ),
  },
  {
    name: "Documents",
    icon: (
      <svg width="26" height="32" viewBox="0 0 26 32">
        <rect x="1" y="1" width="24" height="30" rx="2" fill="#e8f8fc" />
        <path d="M4 5h18M4 9h18M4 13h18M4 17h18M4 21h18M4 25h18" stroke="#1a90b8" strokeWidth="2" />
      </svg>
    ),
  },
  {
    name: "G tool",
    icon: (
      <svg width="32" height="34" viewBox="0 0 32 34">
        <text x="1" y="31" fontSize="36" fontWeight="bold" fontStyle="italic" fill="#c81c14" fontFamily="Liberation Sans, sans-serif">G</text>
        <path d="M18 6l12-5-2 7z" fill="#c81c14" />
      </svg>
    ),
  },
  {
    name: "Floppy",
    icon: (
      <svg width="32" height="34" viewBox="0 0 32 34">
        <path d="M1 1h28l2 2v30H1z" fill="#1838b8" />
        <rect x="9" y="1" width="15" height="11" fill="#b8c0cc" />
        <rect x="18" y="2" width="4" height="8" fill="#1838b8" />
        <rect x="4" y="15" width="24" height="17" fill="#fff" />
        <path d="M6 19h20M6 23h20M6 27h8" stroke="#c03030" strokeWidth="1.5" />
        <text x="15" y="31" fontSize="8" fontWeight="bold" fontFamily="Liberation Sans, sans-serif">64</text>
      </svg>
    ),
  },
  {
    name: "P tool",
    icon: (
      <svg width="32" height="34" viewBox="0 0 32 34">
        <path d="M3 22V3h22l-2 3" fill="none" stroke="#129048" strokeWidth="1.5" />
        <text x="6" y="33" fontSize="34" fontWeight="bold" fontStyle="italic" fill="#148a44" stroke="#148a44" strokeWidth="2" fontFamily="Liberation Sans, sans-serif">P</text>
      </svg>
    ),
  },
  {
    name: "DingTalk",
    icon: (
      <svg width="30" height="34" viewBox="0 0 30 34">
        <rect width="30" height="34" rx="6" fill="#1890ff" />
        <path d="M9 6c6 4 13 7 13 10 0 4-3 6-4 7h3l-8 7 2-6h-3l2-2c-3-1-4-3-4-4l3 0c-3-3-4-6-4-12z" fill="#fff" />
      </svg>
    ),
  },
  { name: "Genesis", icon: <DiscIcon /> },
  {
    name: "Graphic Editor",
    active: true,
    stacked: true,
    icon: (
      <svg width="34" height="32" viewBox="0 0 34 32">
        <path d="M2 1h8l22 29h-9z" fill="#800080" stroke="#fff" />
        <path d="M31 1L3 31" stroke="#fff" strokeWidth="3" />
        <path d="M31 1L3 31" stroke="#301030" strokeWidth="1.5" />
      </svg>
    ),
  },
  {
    name: "Word",
    icon: (
      <svg width="34" height="34" viewBox="0 0 34 34">
        <path d="M6 2h17v28l-20-3z" fill="#e0e8f4" stroke="#7088b8" strokeWidth="1.5" />
        <path d="M13 5l18 1v25l-18 2z" fill="#fff" stroke="#a8b8d8" />
        <path d="M15 23h13M15 26h13M15 29h10M25 10h4M25 14h4" stroke="#4a6cb8" strokeWidth="1.5" />
        <text x="11" y="20" fontSize="15" fontWeight="bold" fill="#28489c" fontFamily="Liberation Serif, serif">W</text>
      </svg>
    ),
  },
  {
    name: "Excel",
    stacked: true,
    icon: (
      <svg width="34" height="34" viewBox="0 0 34 34">
        <path d="M6 2h17v28l-20-3z" fill="#e4f0dc" stroke="#5c9a48" strokeWidth="1.5" />
        <path d="M14 9l18 1v22l-18-2z" fill="#fff" stroke="#70a860" />
        <path d="M21 12h4v4h-4zM27 12h4v4h-4zM21 18h4v4h-4zM27 18h4v4h-4zM21 24h4v4h-4zM27 24h4v4h-4z" fill="#58a048" />
        <text x="5" y="23" fontSize="20" fontWeight="bold" fill="#2a6a20" fontFamily="Liberation Sans, sans-serif">X</text>
      </svg>
    ),
  },
  {
    name: "Notepad",
    icon: (
      <svg width="34" height="34" viewBox="0 0 34 34">
        <path d="M27 5l5 3-2 22-6 2z" fill="#a87838" />
        <path d="M12 3l16 2-3 27-22-6z" fill="#80c4d8" />
        <path d="M20 15l6-8-2 25-12-3z" fill="#e4f6fa" />
        <path d="M12 3l16 2" stroke="#e8f0f0" strokeWidth="3" strokeDasharray="1.5 1" />
      </svg>
    ),
  },
  { name: "Genesis toolkit", icon: <DiscIcon /> },
];

function Taskbar() {
  return (
    <footer className="flex h-10 shrink-0 items-start justify-between border-t border-[#8090a8] bg-[linear-gradient(100deg,#0c2850_0px,#143a68_400px,#10325f_900px,#05265a_960px,#143764_1040px,#0a2c5c_1130px,#12345f_1220px,#12345f_1330px,#052858_1345px,#0a2b58_1600px,#0f2a4a_1700px,#0d2440_100%)]">
      <div className="flex">
        <button aria-label="Start" className="flex w-[60px] justify-center pr-[6px]">
          <svg width="38" height="38" viewBox="0 0 38 38">
            <circle cx="19" cy="19" r="18" fill="#1d5f96" stroke="#8cc8e8" strokeWidth="1" />
            <ellipse cx="19" cy="29" rx="12" ry="8" fill="#38b8e8" opacity="0.7" />
            <ellipse cx="19" cy="10" rx="14" ry="8" fill="#b8d8ec" opacity="0.5" />
            <path d="M12 10c3-2 5-1 7 0l-2 8c-2-1-4-2-7 0z" fill="#f06028" />
            <path d="M20 11c3 1 5 1 8-1l-2 8c-3 2-5 2-8 1z" fill="#90c828" />
            <path d="M9 20c3-2 5-1 7 0l-2 8c-2-1-4-2-7 0z" fill="#48a0e8" />
            <path d="M18 21c3 1 5 1 8-1l-2 8c-3 2-5 2-8 1z" fill="#ffc828" />
          </svg>
        </button>
        <div className="flex gap-1">
          {tasks.map((t) => (
            <div key={t.name} className="flex w-[58px] gap-px">
              <button
                aria-label={t.name}
                className={`flex h-[38px] flex-1 items-center justify-center rounded-[3px] border ${
                  t.active
                    ? "border-[#c8d0dc] bg-[linear-gradient(160deg,#c8cedb_0%,#8490a8_50%,#a0a8bc_100%)]"
                    : "border-[#8496b0] bg-[linear-gradient(160deg,#7b8ca6_0%,#3a5478_40%,#203f6a_100%)]"
                }`}
              >
                {t.icon}
              </button>
              {t.stacked && <span className="h-[38px] w-[5px] rounded-r border border-l-0 border-[#8496b0]" />}
            </div>
          ))}
        </div>
      </div>
      <div className={`${UI} flex h-full items-center text-[12px] text-white`}>
        <div className="mr-4 flex items-center gap-2">
          <svg width="15" height="18" viewBox="0 0 16 18" fill="none">
            <path d="M3 6c0-4 4-1 6-3s3-2 5-2" stroke="#aaa" />
            <rect x="0.5" y="7.5" width="15" height="9" fill="#d8d8d8" stroke="#888" />
            <path d="M2 10h12M2 12h12M4 14.5h8" stroke="#666" strokeDasharray="1 1" />
          </svg>
          <svg width="16" height="18" viewBox="0 1 16 18">
            <circle cx="8" cy="9" r="7.2" fill="#1414a8" stroke="#c8d0f0" />
            <text x="4.5" y="13" fontSize="12" fontWeight="bold" fill="#fff" fontFamily="Liberation Sans, sans-serif">?</text>
          </svg>
          <svg width="9" height="22" viewBox="0 0 9 22" fill="none" stroke="#fff">
            <path d="M3 1h5v4H3zM1 3h5v4H1z" />
            <path d="M2 15h5l-2.5 3z" fill="#fff" stroke="none" />
          </svg>
          <svg width="8" height="5" viewBox="0 0 8 5">
            <path d="M4 0l4 5H0z" fill="#fff" />
          </svg>
          <svg width="16" height="16" viewBox="0 0 16 16" className="ml-[6px]">
            <path d="M2 1v15" stroke="#ddd" strokeWidth="1.5" />
            <path d="M3 2h6l1 2h5v5H9L8 8H3z" fill="#fff" />
            <circle cx="11" cy="11.5" r="4.5" fill="#e03020" />
            <path d="M9 9.5l4 4M13 9.5l-4 4" stroke="#fff" strokeWidth="1.5" />
          </svg>
          <svg width="16" height="14" viewBox="0 0 16 14" fill="none" stroke="#fff">
            <path d="M1 5h2l4-4v12L3 9H1z" fill="#fff" />
            <path d="M9 4.5c1.5 1.5 1.5 3.5 0 5M11 3c2.5 2 2.5 6 0 8M13 1.5c3 3 3 8 0 11" />
          </svg>
          <svg width="16" height="16" viewBox="0 0 16 16" fill="none" stroke="#fff">
            <path d="M6 3.5h8.5v8H4.5V7" strokeWidth="1.5" />
            <path d="M9.5 12v3M5 15h9M1 1v4M4 1v4M0.5 4.5h4V7h-4zM2.5 7v5" />
          </svg>
        </div>
        <div className="w-[59px] text-center leading-[18px]">
          <p>22:53</p>
          <p>2023/9/22</p>
        </div>
        <button aria-label="Show desktop" className="ml-[9px] h-[39px] w-[14px] border border-[#5c6c84] bg-[linear-gradient(160deg,#5c6c84,#12243c_50%)]" />
      </div>
    </footer>
  );
}

export default function App() {
  return (
    <div className="flex h-screen min-h-[1060px] w-full flex-col overflow-hidden bg-black">
      <TitleBar />
      <MenuBar />
      <main className="flex min-h-0 flex-1">
        <LayerPanel />
        <div className="relative ml-[2px] min-w-0 flex-1 overflow-hidden bg-black">
          <BoardDrawing />
          <Popview />
        </div>
        <RightPanel />
      </main>
      <CommandBar />
      <StatusBar />
      <div className="h-[7px] shrink-0 border-b border-[#dce8f8] bg-[linear-gradient(90deg,#8ea8d4,#9dbcec_20%,#a4c4f4_60%,#88a8e0_78%,#5c80bc_100%)]" />
      <Taskbar />
    </div>
  );
}
